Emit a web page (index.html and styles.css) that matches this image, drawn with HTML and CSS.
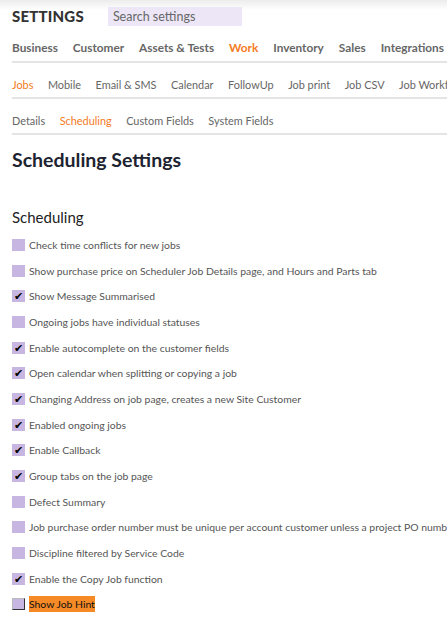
FILE: index.html
```html
<!DOCTYPE html>
<html>
<head>
<meta charset="utf-8">
<link rel="stylesheet" href="styles.css">
</head>
<body>
<div class="topshade"></div>
<header class="head">
  <div class="title">SETTINGS</div>
  <div class="search">Search settings</div>
</header>
<nav class="tabs tabs-main">
  <span>Business</span><span>Customer</span><span>Assets &amp; Tests</span><span class="on">Work</span><span>Inventory</span><span>Sales</span><span>Integrations</span>
</nav>
<nav class="tabs tabs-sub">
  <span class="on">Jobs</span><span>Mobile</span><span>Email &amp; SMS</span><span>Calendar</span><span>FollowUp</span><span>Job print</span><span>Job CSV</span><span>Job Workflow</span>
</nav>
<nav class="tabs tabs-sub">
  <span>Details</span><span class="on">Scheduling</span><span>Custom Fields</span><span>System Fields</span>
</nav>
<h1 class="page-title">Scheduling Settings</h1>
<h2 class="section-title">Scheduling</h2>
<ul class="opts">
  <li><span class="box"></span><span class="lbl">Check time conflicts for new jobs</span></li>
  <li><span class="box"></span><span class="lbl">Show purchase price on Scheduler Job Details page, and Hours and Parts tab</span></li>
  <li><span class="box checked">✔</span><span class="lbl">Show Message Summarised</span></li>
  <li><span class="box"></span><span class="lbl">Ongoing jobs have individual statuses</span></li>
  <li><span class="box checked">✔</span><span class="lbl">Enable autocomplete on the customer fields</span></li>
  <li><span class="box checked">✔</span><span class="lbl">Open calendar when splitting or copying a job</span></li>
  <li><span class="box checked">✔</span><span class="lbl">Changing Address on job page, creates a new Site Customer</span></li>
  <li><span class="box checked">✔</span><span class="lbl">Enabled ongoing jobs</span></li>
  <li><span class="box checked">✔</span><span class="lbl">Enable Callback</span></li>
  <li><span class="box checked">✔</span><span class="lbl">Group tabs on the job page</span></li>
  <li><span class="box"></span><span class="lbl">Defect Summary</span></li>
  <li><span class="box"></span><span class="lbl">Job purchase order number must be unique per account customer unless a project PO number is set</span></li>
  <li><span class="box"></span><span class="lbl">Discipline filtered by Service Code</span></li>
  <li><span class="box checked">✔</span><span class="lbl">Enable the Copy Job function</span></li>
  <li><span class="box focus"></span><span class="lbl hint">Show Job Hint</span></li>
</ul>
</body>
</html>
```
FILE: styles.css
```css
html, body { margin: 0; padding: 0; background: #fff; }
body {
  font-family: "Lato", "Liberation Sans", sans-serif;
  color: #555;
  width: 447px;
  overflow: hidden;
  padding-left: 12px;
  box-sizing: border-box;
  position: relative;
}
.topshade {
  position: absolute; left: 0; right: 0; top: 0; height: 10px;
  background: linear-gradient(#ececec, rgba(255,255,255,0));
}
.head {
  position: relative;
  display: flex; align-items: center; gap: 24px;
  height: 32px;
}
.title { font-weight: 900; font-size: 15px; color: #333; letter-spacing: 0.2px; }
.search {
  background: #ece6f7; color: #666; font-size: 12.5px;
  width: 134px; height: 19px; line-height: 19px; padding-left: 5px; box-sizing: border-box;
}
.tabs {
  display: flex; white-space: nowrap; border-bottom: 2px solid #e4e4e4;
  overflow: hidden; line-height: 14px;
}
.tabs-main { gap: 15px; font-weight: 700; font-size: 11.8px; color: #666; padding: 9px 0 6px; }
.tabs-sub { gap: 14.5px; font-size: 10.9px; color: #666; padding: 15px 0 5px; }
.tabs .on { color: #f47b25; }
.page-title { margin: 13px 0 0; font-size: 19.5px; font-weight: 700; color: #1d2330; height: 24px; line-height: 24px; }
.section-title { margin: 36px 0 0; font-size: 15px; font-weight: 400; color: #222; line-height: 18px; }
.opts { list-style: none; margin: 6px 0 0; padding: 0; }
.opts li { display: flex; align-items: center; height: 25.7px; gap: 4px; white-space: nowrap; }
.box {
  width: 13px; height: 12px; background: #c8b6e2; flex: none; box-sizing: border-box;
  font-size: 11px; line-height: 12px; color: #000; text-align: center;
}
.box.focus { border: 1px solid #333; border-left-color: #bbb; border-top-color: #bbb; }
.lbl { font-size: 10.4px; color: #555; }
.lbl.hint { background: #f68a26; color: #111; padding: 2px 0; }
```
